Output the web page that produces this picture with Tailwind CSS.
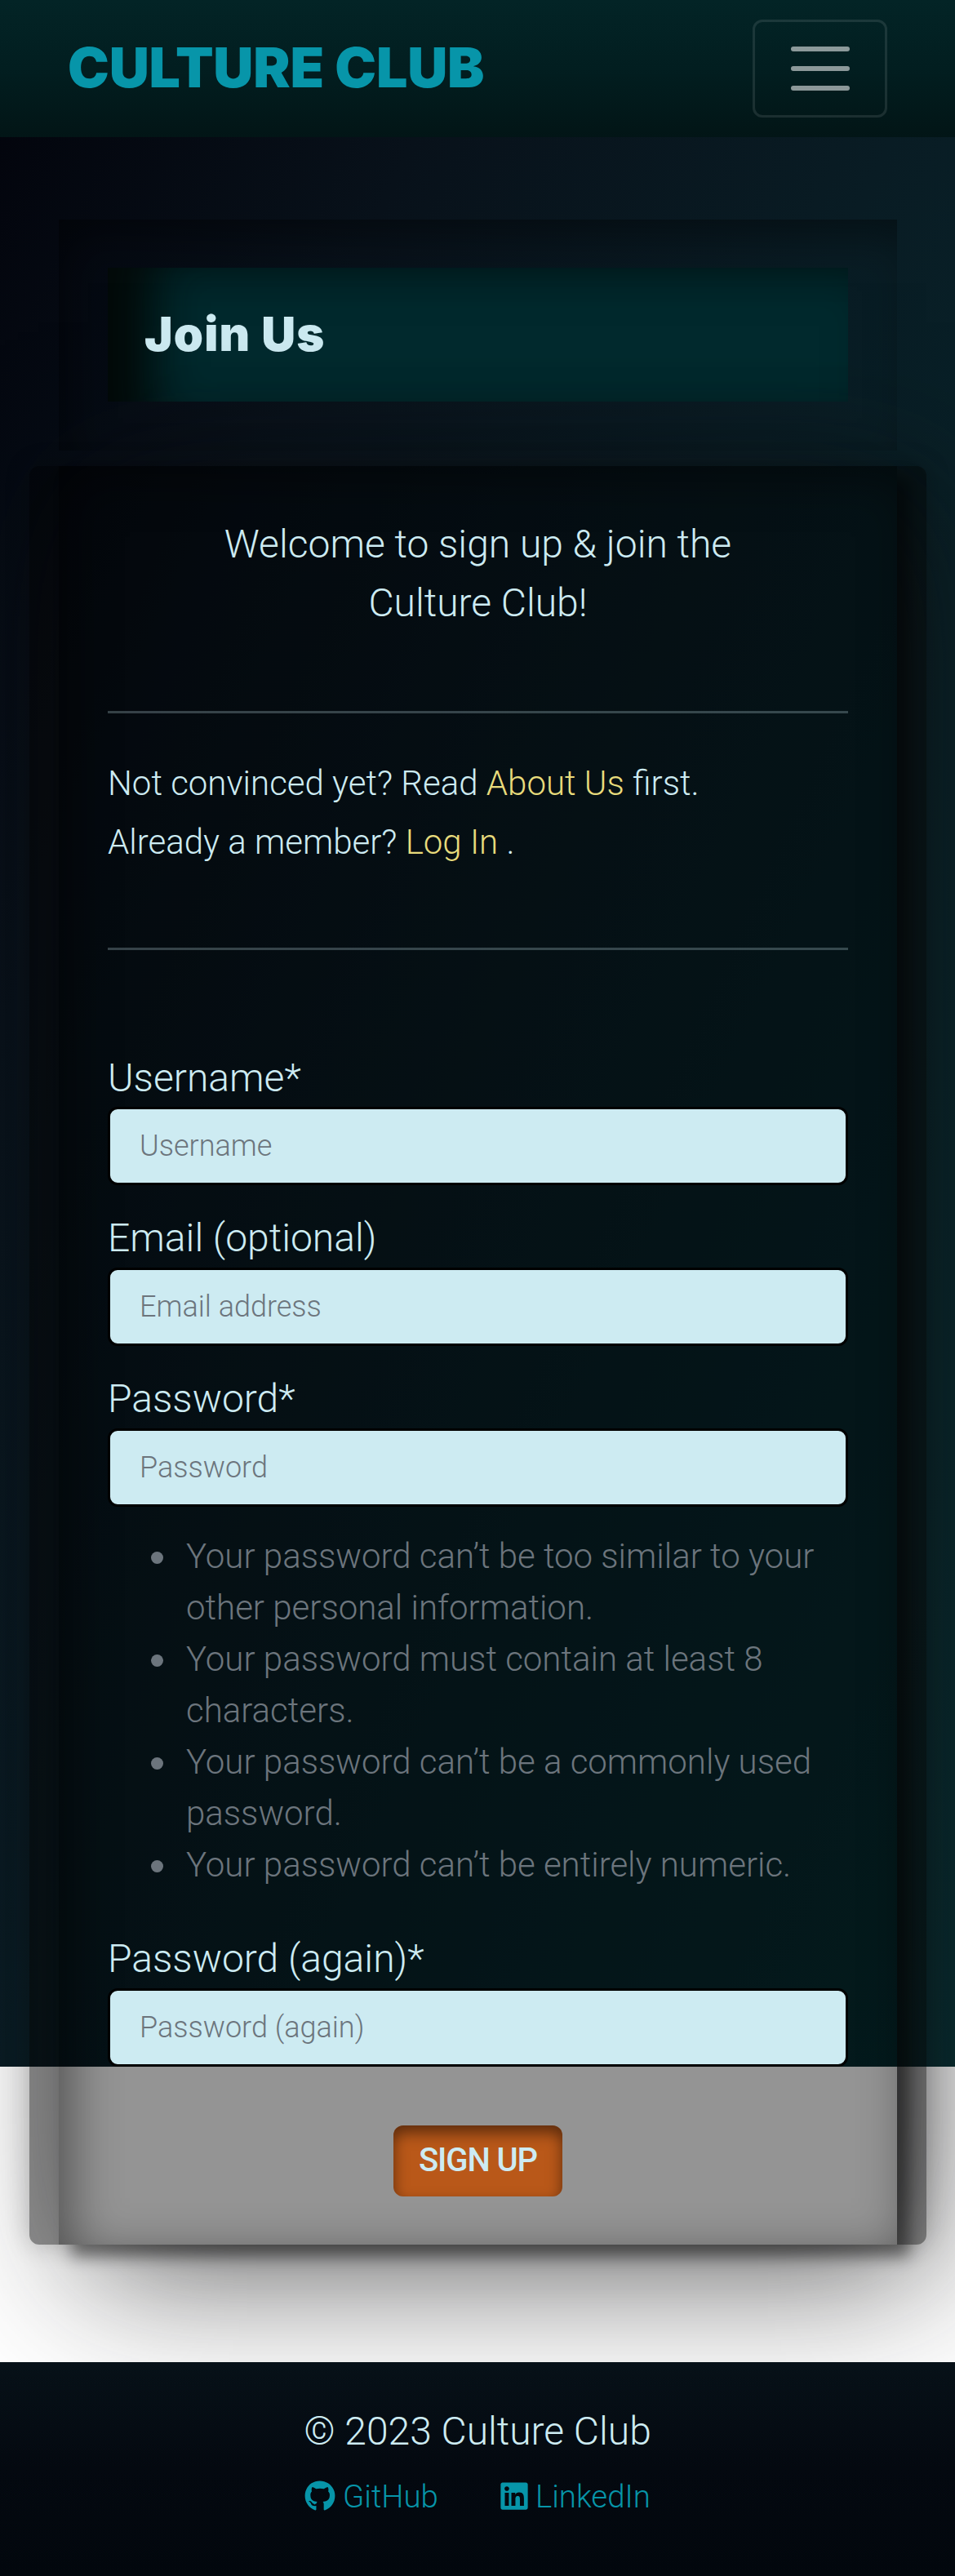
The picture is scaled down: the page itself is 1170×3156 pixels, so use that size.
<!DOCTYPE html>
<html lang="en">
<head>
<meta charset="utf-8">
<title>Culture Club</title>
<script src="https://cdn.jsdelivr.net/npm/@tailwindcss/browser@4"></script>
</head>
<body class="relative isolate flex h-[3156px] w-[1170px] flex-col overflow-hidden bg-white font-['Roboto',sans-serif] font-light text-[#cdebf2]">
<div class="absolute inset-x-0 top-0 -z-10 h-[2532px] bg-[linear-gradient(to_bottom_right,#02030b_0%,#08111a_25%,#091c24_50%,#062e32_100%)]"></div>

<nav class="flex h-[168px] shrink-0 items-center justify-between bg-linear-to-b from-[#032426] via-[#021e20] to-[#021516] pr-[83px] pl-[83px]">
  <a class="pb-[5px] font-['Inter',sans-serif] text-[68px] leading-none font-black tracking-[-0.2px] whitespace-nowrap text-[#0795a9]">CULTURE CLUB</a>
  <button class="flex h-[120px] w-[165px] items-center justify-center rounded-[12px] border-[3px] border-white/10">
    <svg class="size-[90px]" viewBox="0 0 30 30" fill="none" stroke="#fff" stroke-opacity=".55" stroke-width="2" stroke-linecap="round" stroke-miterlimit="10"><path d="M4 7h22M4 15h22M4 23h22"/></svg>
  </button>
</nav>

<header class="mt-[101px] mr-[71px] ml-[72px] h-[283px] shrink-0 px-[60px] pt-[59px] shadow-[inset_15px_24px_60px_-8px_rgba(0,0,0,0.45)]">
  <div class="flex h-[164px] items-center bg-[#022a2e] pb-[2px] pl-[45px] shadow-[inset_85px_0_60px_-30px_#030a09,inset_0_36px_60px_-36px_rgba(0,0,0,0.5)]">
    <h1 class="font-['Inter',sans-serif] text-[58px] leading-none font-black tracking-[1.2px]">Join Us</h1>
  </div>
</header>

<main class="mt-[19px] mr-[35px] ml-[36px] h-[2179px] shrink-0 rounded-[12px] bg-black/42 px-[36px] shadow-[0_0_30px_rgba(0,0,0,0.22)]">
  <section class="h-full px-[60px] pt-[60px] shadow-[15px_15px_18px_rgba(0,0,0,0.45),36px_30px_170px_rgba(16,17,18,0.72),inset_15px_15px_60px_rgba(0,0,0,0.45)]">
    <p class="text-center text-[48px] leading-[72px]">Welcome to sign up &amp; join the<br>Culture Club!</p>
    <hr class="mt-[96px] border-t-[3px] border-[#cdebf2]/25">
    <p class="mt-[50px] text-[42px] leading-[72px]">Not convinced yet? Read <a class="text-[#e8dc7c]">About Us</a> first.<br>Already a member? <a class="text-[#e8dc7c]">Log In</a> .</p>
    <hr class="mt-[93px] border-t-[3px] border-[#cdebf2]/25">
    <form class="flex flex-col pt-[121px]">
      <label class="text-[48px] leading-[72px]">Username*</label>
      <input class="-mt-px h-[96px] rounded-[12px] border-[3px] border-black bg-[#cdebf2] px-[36px] text-[36px] placeholder:text-[#6c757d]" placeholder="Username">
      <label class="mt-[29px] text-[48px] leading-[72px]">Email (optional)</label>
      <input class="h-[96px] rounded-[12px] border-[3px] border-black bg-[#cdebf2] px-[36px] text-[36px] placeholder:text-[#6c757d]" placeholder="Email address">
      <label class="mt-[29px] text-[48px] leading-[72px]">Password*</label>
      <input class="h-[96px] rounded-[12px] border-[3px] border-black bg-[#cdebf2] px-[36px] text-[36px] placeholder:text-[#6c757d]" placeholder="Password">
      <ul class="mt-[29px] pl-[53px] text-[42px] leading-[63px] text-[#6c757d]">
        <li class="flex gap-[28px]"><span class="mt-[26px] size-[15px] shrink-0 rounded-full bg-current"></span><span>Your password can’t be too similar to your other personal information.</span></li>
        <li class="flex gap-[28px]"><span class="mt-[26px] size-[15px] shrink-0 rounded-full bg-current"></span><span>Your password must contain at least 8 characters.</span></li>
        <li class="flex gap-[28px]"><span class="mt-[26px] size-[15px] shrink-0 rounded-full bg-current"></span><span>Your password can’t be a commonly used password.</span></li>
        <li class="flex gap-[28px]"><span class="mt-[26px] size-[15px] shrink-0 rounded-full bg-current"></span><span>Your password can’t be entirely numeric.</span></li>
      </ul>
      <label class="mt-[48px] text-[48px] leading-[72px]">Password (again)*</label>
      <input class="h-[96px] rounded-[12px] border-[3px] border-black bg-[#cdebf2] px-[36px] text-[36px] placeholder:text-[#6c757d]" placeholder="Password (again)">
      <button type="button" class="mt-[72px] h-[87px] w-[207px] self-center rounded-[12px] bg-[#b95819] pb-[2px] text-[40px] font-medium tracking-[-1.1px] shadow-[inset_0_9px_18px_rgba(0,0,0,0.5)]">SIGN UP</button>
    </form>
  </section>
</main>

<footer class="z-10 mt-[144px] flex flex-1 flex-col items-center bg-linear-to-b from-[#071118] via-[#040910] to-[#02070d] pt-[49px]">
  <p class="text-[48px] leading-[72px]">© 2023 Culture Club</p>
  <div class="mt-[14px] flex gap-[76px] text-[38.4px] leading-[60px] text-[#0795a9]">
    <a class="flex items-center gap-[9px]"><svg class="mb-[3px] size-[38px]" viewBox="0 0 496 512" fill="currentColor"><path d="M165.900 397.400c0 2-2.300 3.600-5.200 3.600-3.300.3-5.600-1.300-5.600-3.600 0-2 2.300-3.600 5.200-3.600 3-.3 5.600 1.300 5.600 3.600zM244.800 8C106.100 8 0 113.300 0 252c0 110.900 69.800 205.800 169.500 239.200 12.800 2.300 17.300-5.600 17.300-12.100 0-6.200-.3-40.400-.3-61.400 0 0-70 15-84.700-29.800 0 0-11.400-29.100-27.800-36.600 0 0-22.900-15.700 1.600-15.400 0 0 24.900 2 38.600 25.800 21.900 38.600 58.600 27.500 72.900 20.900 2.300-16 8.800-27.100 16-33.700-55.900-6.200-112.300-14.300-112.300-110.500 0-27.500 7.600-41.300 23.600-58.900-2.600-6.500-11.100-33.300 2.600-67.900 20.900-6.500 69 27 69 27 20-5.600 41.500-8.500 62.800-8.500s42.800 2.900 62.800 8.500c0 0 48.100-33.600 69-27 13.700 34.700 5.200 61.400 2.600 67.900 16 17.700 25.800 31.500 25.800 58.900 0 96.500-58.900 104.200-114.800 110.500 9.200 7.900 17 22.900 17 46.400 0 33.700-.3 75.400-.3 83.600 0 6.500 4.600 14.400 17.300 12.100C428.200 457.800 496 362.900 496 252 496 113.300 383.500 8 244.800 8z"/></svg>GitHub</a>
    <a class="flex items-center gap-[9px]"><svg class="mb-[3px] h-[38px] w-[34px]" viewBox="0 0 448 512" fill="currentColor"><path d="M416 32H31.900C14.300 32 0 46.500 0 64.300v383.400C0 465.500 14.300 480 31.900 480H416c17.600 0 32-14.500 32-32.300V64.300c0-17.800-14.400-32.300-32-32.300zM135.400 416H69V202.200h66.500V416zm-33.200-243c-21.300 0-38.500-17.300-38.500-38.500S80.900 96 102.200 96c21.200 0 38.500 17.300 38.500 38.500 0 21.300-17.200 38.500-38.500 38.500zm282.100 243h-66.400V312c0-24.800-.5-56.700-34.500-56.700-34.600 0-39.900 27-39.900 54.900V416h-66.400V202.200h63.700v29.200h.9c8.900-16.800 30.600-34.500 62.900-34.500 67.200 0 79.700 44.300 79.700 101.900V416z"/></svg>LinkedIn</a>
  </div>
</footer>
</body>
</html>
